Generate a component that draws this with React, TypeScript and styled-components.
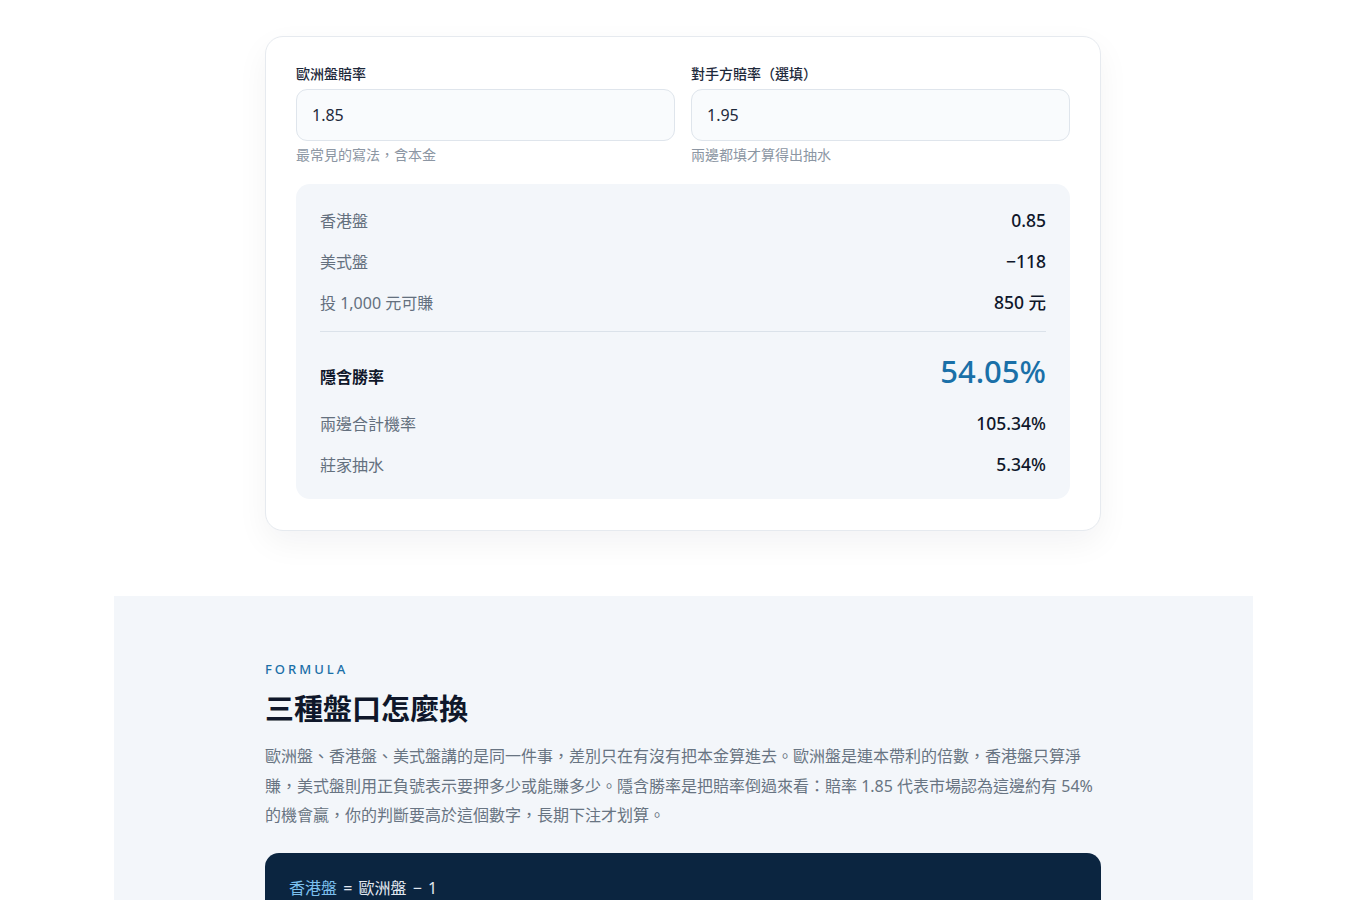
import React, { useState } from "react";
import styled, { createGlobalStyle } from "styled-components";

const GlobalStyle = createGlobalStyle`
  body {
    margin: 0;
    background: #ffffff;
    font-family: "Noto Sans", "Noto Sans CJK TC", sans-serif;
    color: #0f172a;
  }
`;

const Page = styled.div`
  padding-top: 36px;
  display: flex;
  flex-direction: column;
  align-items: center;
`;

const Card = styled.div`
  width: 836px;
  box-sizing: border-box;
  padding: 28px 30px 31px;
  background: #ffffff;
  border: 1px solid #e6eaef;
  border-radius: 18px;
  box-shadow: 0 12px 32px rgba(15, 23, 42, 0.05);
`;

const Fields = styled.div`
  display: grid;
  grid-template-columns: 1fr 1fr;
  gap: 16px;
`;

const Field = styled.label`
  display: flex;
  flex-direction: column;
`;

const Label = styled.span`
  font-size: 14px;
  font-weight: 500;
  color: #1e293b;
  line-height: 18px;
  margin-bottom: 6px;
`;

const Input = styled.input`
  height: 52px;
  box-sizing: border-box;
  padding: 0 15px;
  border: 1px solid #dfe5ec;
  border-radius: 11px;
  background: #f9fbfd;
  font-family: inherit;
  font-size: 16px;
  color: #1e293b;
  outline: none;
`;

const Hint = styled.span`
  margin-top: 5px;
  font-size: 14px;
  line-height: 18px;
  color: #8c96a3;
`;

const Results = styled.div`
  margin-top: 20px;
  padding: 15px 24px 15px;
  background: #f3f6fa;
  border-radius: 14px;
`;

const Row = styled.div<{ $tall?: boolean }>`
  display: flex;
  justify-content: space-between;
  align-items: ${(p) => (p.$tall ? "baseline" : "center")};
  height: ${(p) => (p.$tall ? "53px" : "41px")};
  margin-top: ${(p) => (p.$tall ? "17px" : "0")};
  padding-top: ${(p) => (p.$tall ? "1px" : "0")};
  box-sizing: border-box;
`;

const RowLabel = styled.span<{ $strong?: boolean }>`
  font-size: 16px;
  font-weight: ${(p) => (p.$strong ? 700 : 400)};
  color: ${(p) => (p.$strong ? "#0f172a" : "#64707e")};
`;

const RowValue = styled.span<{ $big?: boolean }>`
  font-size: ${(p) => (p.$big ? "31px" : "17.5px")};
  font-weight: 500;
  color: ${(p) => (p.$big ? "#1a70a8" : "#0f172a")};
`;

const Divider = styled.div`
  height: 1px;
  background: #dbe2ea;
  margin-top: 9px;
`;

const FormulaSection = styled.section`
  margin-top: 65px;
  width: 1139px;
  background: #f3f6fa;
  display: flex;
  justify-content: center;
  padding: 64px 0 0;
`;

const FormulaInner = styled.div`
  width: 836px;
`;

const Eyebrow = styled.div`
  font-size: 13px;
  font-weight: 500;
  letter-spacing: 3px;
  color: #1a6fa8;
  line-height: 18px;
`;

const Heading = styled.h2`
  margin: 12px 0 0;
  font-size: 29px;
  font-weight: 700;
  line-height: 38px;
  color: #0f172a;
`;

const Paragraph = styled.p`
  margin: 14px 0 0;
  font-size: 16px;
  line-height: 29.5px;
  color: #687482;
`;

const CodeBox = styled.div`
  margin-top: 22px;
  background: #0b2540;
  border-radius: 14px 14px 0 0;
  padding: 22px 24px 20px;
  min-height: 60px;
  font-size: 16px;
  color: #e2e8f0;
  word-spacing: 2px;
`;

const Key = styled.span`
  color: #7cc0ef;
`;

type Result = { label: string; value: string };

export default function App() {
  const [decimal, setDecimal] = useState("1.85");
  const [other, setOther] = useState("1.95");

  const top: Result[] = [
    { label: "香港盤", value: "0.85" },
    { label: "美式盤", value: "−118" },
    { label: "投 1,000 元可賺", value: "850 元" },
  ];
  const bottom: Result[] = [
    { label: "兩邊合計機率", value: "105.34%" },
    { label: "莊家抽水", value: "5.34%" },
  ];

  return (
    <>
      <GlobalStyle />
      <Page>
        <Card>
          <Fields>
            <Field>
              <Label>歐洲盤賠率</Label>
              <Input value={decimal} onChange={(e) => setDecimal(e.target.value)} />
              <Hint>最常見的寫法，含本金</Hint>
            </Field>
            <Field>
              <Label>對手方賠率（選填）</Label>
              <Input value={other} onChange={(e) => setOther(e.target.value)} />
              <Hint>兩邊都填才算得出抽水</Hint>
            </Field>
          </Fields>
          <Results>
            {top.map((r) => (
              <Row key={r.label}>
                <RowLabel>{r.label}</RowLabel>
                <RowValue>{r.value}</RowValue>
              </Row>
            ))}
            <Divider />
            <Row $tall>
              <RowLabel $strong>隱含勝率</RowLabel>
              <RowValue $big>54.05%</RowValue>
            </Row>
            {bottom.map((r) => (
              <Row key={r.label}>
                <RowLabel>{r.label}</RowLabel>
                <RowValue>{r.value}</RowValue>
              </Row>
            ))}
          </Results>
        </Card>

        <FormulaSection>
          <FormulaInner>
            <Eyebrow>FORMULA</Eyebrow>
            <Heading>三種盤口怎麼換</Heading>
            <Paragraph>
              歐洲盤、香港盤、美式盤講的是同一件事，差別只在有沒有把本金算進去。歐洲盤是連本帶利的倍數，香港盤只算淨賺，美式盤則用正負號表示要押多少或能賺多少。隱含勝率是把賠率倒過來看：賠率 1.85 代表市場認為這邊約有 54% 的機會贏，你的判斷要高於這個數字，長期下注才划算。
            </Paragraph>
            <CodeBox>
              <Key>香港盤</Key> = 歐洲盤 − 1
            </CodeBox>
          </FormulaInner>
        </FormulaSection>
      </Page>
    </>
  );
}
